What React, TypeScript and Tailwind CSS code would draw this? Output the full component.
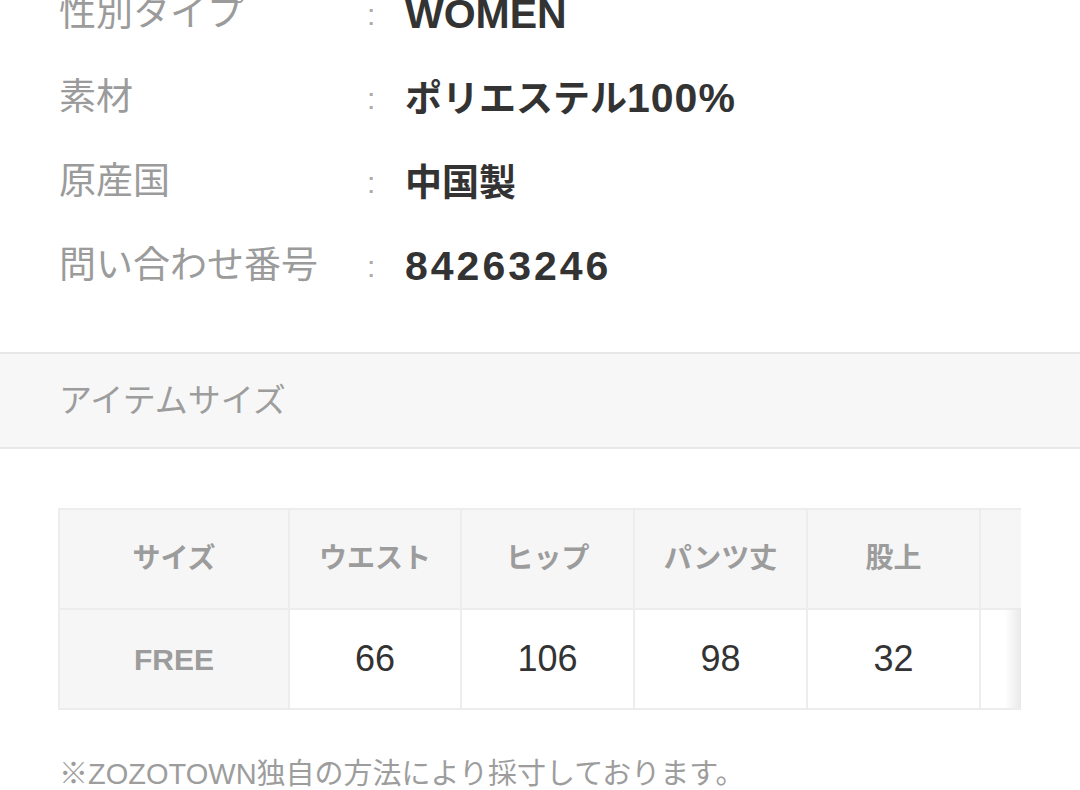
const specs = [
  { label: "性別タイプ", value: <span>WOMEN</span> },
  {
    label: "素材",
    value: (
      <>
        <span className="text-[37px]">ポリエステル</span>
        <span className="tracking-[1px]">100%</span>
      </>
    ),
  },
  { label: "原産国", value: <span className="text-[37px]">中国製</span> },
  { label: "問い合わせ番号", value: <span className="tracking-[3px]">84263246</span> },
];

const headers = ["サイズ", "ウエスト", "ヒップ", "パンツ丈", "股上", "裾幅"];
const sizes = ["FREE", "66", "106", "98", "32", "25"];

export default function App() {
  return (
    <div className="w-[1080px] h-[790px] overflow-hidden bg-white font-['Liberation_Sans','Noto_Sans_CJK_JP',sans-serif]">
      <div className="-mt-[28px] pl-[59px]">
        {specs.map((s) => (
          <div key={s.label} className="flex items-center h-[84px]">
            <div className="w-[308px] text-[37px] text-[#9b9b9b]">{s.label}</div>
            <div className="w-[38px] text-[30px] text-[#aaaaaa]">:</div>
            <div className="text-[41px] font-bold text-[#333333] leading-none">{s.value}</div>
          </div>
        ))}
      </div>

      <div className="mt-[44px] h-[97px] flex items-center pl-[59px] bg-[#f7f7f7] border-y-2 border-[#e8e8e8]">
        <span className="text-[33px] text-[#9d9d9d]">アイテムサイズ</span>
      </div>

      <div className="relative mt-[59px] ml-[58px] w-[963px] overflow-hidden">
        <div className="grid grid-cols-[228px_170px_171px_171px_171px_171px] gap-[2px] p-[2px] pr-0 w-max bg-[#ededed]">
          {headers.map((h) => (
            <div key={h} className="h-[98px] flex items-center justify-center bg-[#f6f6f6] text-[28px] font-bold text-[#9c9c9c]">
              {h}
            </div>
          ))}
          {sizes.map((v, i) => (
            <div
              key={i}
              className={
                i === 0
                  ? "h-[98px] flex items-center justify-center bg-[#f6f6f6] text-[30px] font-bold text-[#9c9c9c]"
                  : "h-[98px] flex items-center justify-center bg-white text-[36px] text-[#333333]"
              }
            >
              {v}
            </div>
          ))}
        </div>
        <div className="absolute right-0 top-[100px] bottom-[2px] w-[16px] bg-gradient-to-r from-transparent to-[#e9e9e9]" />
      </div>

      <div className="mt-[43px] pl-[59px] text-[29px] text-[#9d9d9d]">
        ※ZOZOTOWN独自の方法により採寸しております。
      </div>
    </div>
  );
}
